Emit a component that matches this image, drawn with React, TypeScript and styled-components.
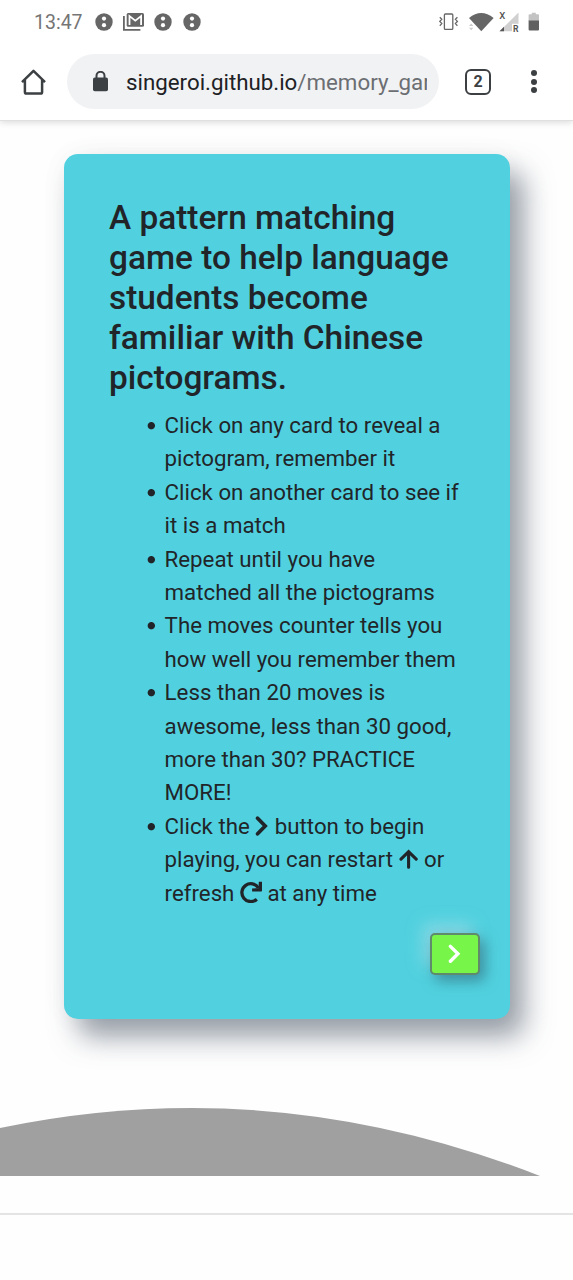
import React from "react";
import styled, { createGlobalStyle } from "styled-components";

const GlobalStyle = createGlobalStyle`
  * { box-sizing: border-box; }
  body { margin: 0; background: #fefefe; font-family: Roboto, sans-serif; }
  svg { display: block; flex: none; }
`;

const Screen = styled.div`
  width: 573px;
  height: 1280px;
  overflow: hidden;
  display: flex;
  flex-direction: column;
`;

const BrowserTop = styled.header`
  height: 121px;
  flex: none;
  background: #fff;
  border-bottom: 1px solid #e0e0e0;
  box-shadow: 0 1px 7px rgba(0, 0, 0, 0.16);
`;

const StatusBar = styled.div`
  height: 43px;
  padding: 0 33px 0 34px;
  display: flex;
  align-items: center;
  justify-content: space-between;
`;

const StatusGroup = styled.div`
  display: flex;
  align-items: center;
`;

const Clock = styled.span`
  width: 61px;
  padding-top: 2px;
  font-size: 19.5px;
  line-height: 24px;
  color: #757575;
`;

const AddressRow = styled.div`
  height: 77px;
  padding: 0 24px 0 20px;
  display: flex;
  align-items: center;
`;

const AddressField = styled.div`
  width: 372px;
  height: 55px;
  margin: 0 26px 0 20px;
  padding: 0 12px 0 25px;
  display: flex;
  align-items: center;
  border-radius: 28px;
  background: #f1f2f4;
`;

const Url = styled.span`
  margin-left: 17px;
  width: 301px;
  overflow: hidden;
  white-space: nowrap;
  font-size: 22.3px;
  line-height: 32px;
  color: #202124;
`;

const UrlPath = styled.span`
  color: #6b6e72;
`;

const TabCount = styled.div`
  width: 26px;
  height: 26px;
  border: 2.5px solid #3c4043;
  border-radius: 6px;
  display: flex;
  align-items: center;
  justify-content: center;
  font: 700 16px/20px Roboto, sans-serif;
  color: #3c4043;
`;

const MenuDots = styled.div`
  margin-left: 40px;
  display: flex;
  flex-direction: column;
  gap: 2.6px;
`;

const Dot = styled.span`
  width: 6px;
  height: 6px;
  border-radius: 50%;
  background: #3c4043;
`;

const Card = styled.main`
  width: 446px;
  height: 865px;
  flex: none;
  margin: 33px 0 0 64px;
  padding: 44px 30px 44px 45px;
  display: flex;
  flex-direction: column;
  border-radius: 14px;
  background: #51d1df;
  box-shadow: 14px 18px 28px rgba(70, 82, 98, 0.55), 0 0 30px rgba(0, 0, 0, 0.035);
  color: #212529;
`;

const Title = styled.h1`
  width: 356px;
  margin: 0 0 11px;
  font-size: 33.4px;
  font-weight: 500;
  line-height: 40px;
`;

const Rules = styled.ul`
  width: 356px;
  margin: 0;
  padding: 0 0 0 37.6px;
  list-style: none;
  font-size: 22.27px;
  line-height: 33.4px;
`;

const Rule = styled.li`
  padding-left: 18px;
  background: radial-gradient(circle at 4.3px 16.7px, #212529 3.2px, transparent 4.1px);
`;

const InlineIcon = styled.svg`
  && { display: inline-block; }
  vertical-align: -2px;
`;

const NextButton = styled.button`
  width: 50px;
  height: 42px;
  margin: 23px 0 0;
  padding: 0;
  align-self: flex-end;
  display: flex;
  align-items: center;
  justify-content: center;
  border: 2px solid #5f8a6b;
  border-radius: 5px;
  background: #77f548;
  box-shadow: 5px 6px 14px rgba(40, 80, 95, 0.5), -7px -9px 16px rgba(190, 225, 235, 0.5);
`;

const Hill = styled.svg`
  margin-top: 89px;
`;

const Divider = styled.hr`
  width: 100%;
  height: 2px;
  margin: 37px 0 0;
  border: 0;
  background: #e4e4e4;
`;

const NoticeIcon = ({ gap = 0 }: { gap?: number }) => (
  <svg width={18 + gap} height="18" viewBox={`0 0 ${18 + gap} 18`}>
    <circle cx="9" cy="9" r="8.7" fill="#666" />
    <circle cx="9" cy="5.6" r="2.1" fill="#fff" />
    <circle cx="9" cy="12.2" r="2.1" fill="#fff" />
  </svg>
);

const MailIcon = () => (
  <svg width="30.5" height="20" viewBox="0 0 30.5 20">
    <path d="M.9 4v13.8h16.5" fill="none" stroke="#666" strokeWidth="1.8" />
    <rect x="3.7" y="1" width="17.3" height="13.8" rx="1.5" fill="#666" />
    <path d="M6.5 13V4l5.8 4.6L18.1 4v9" fill="none" stroke="#fff" strokeWidth="1.8" />
  </svg>
);

const VibrateIcon = () => (
  <svg width="30" height="20" viewBox="0 0 30 20">
    <g fill="none" stroke="#666" strokeWidth="1.3">
      <rect x="5.4" y="2" width="8.4" height="15.4" rx="1" />
      <path d="M.8 5.2l2 2-2 2.2 2 2.2-2 2.2M18.4 5.2l-2 2 2 2.2-2 2.2 2 2.2" />
    </g>
  </svg>
);

const WifiIcon = () => (
  <svg width="30" height="20" viewBox="0 0 30 20">
    <path d="M0 6Q12.2-4.2 24.6 6L12.3 19.2z" fill="#666" />
    <path d="M0 14l2.2-2.4L4.4 14zM0 15.8h4.4l-2.2 2.4z" fill="#ccc" />
  </svg>
);

const SignalIcon = () => (
  <svg width="29" height="24" viewBox="0 0 29 24">
    <path d="M19.5 2.5v18.8H.5z" fill="#d0d0d0" />
    <path d="M5 16.8v4.5H.5z" fill="#555" />
    <path d="M13 13.8h7.5v8H13z" fill="#fff" />
    <text x=".2" y="9.4" fontSize="9.5" fontWeight="500" fill="#555">X</text>
    <text x="14" y="22" fontSize="8.6" fontWeight="700" fill="#555">R</text>
  </svg>
);

const BatteryIcon = () => (
  <svg width="12" height="20" viewBox="0 0 12 20">
    <path d="M1.6 2.2h2.2V.8h4v1.4H10q1 0 1 1V9H.6V3.2q0-1 1-1z" fill="#c3c3c3" />
    <path d="M.6 8.5H11v9q0 1-1 1H1.6q-1 0-1-1z" fill="#606060" />
  </svg>
);

const HomeIcon = () => (
  <svg width="27" height="28" viewBox="0 0 27 28">
    <path
      d="M2 14.2L13.5 2.9 25 14.2M4.9 11.8V24q0 1.6 1.6 1.6h14q1.6 0 1.6-1.6V11.8"
      fill="none"
      stroke="#3c4043"
      strokeWidth="2.5"
      strokeLinejoin="round"
    />
  </svg>
);

const LockIcon = () => (
  <svg width="17" height="22" viewBox="0 0 17 22">
    <rect x="1" y="6.6" width="15" height="13.6" rx="1.8" fill="#3c4043" />
    <path d="M4.5 7.6V4.8a4 4 0 0 1 8 0v2.8" fill="none" stroke="#3c4043" strokeWidth="2" />
  </svg>
);

const ChevronIcon = () => (
  <InlineIcon width="14" height="20" viewBox="0 0 14 20">
    <path
      d="M2.6 2.2L10.2 10l-7.6 7.8"
      fill="none"
      stroke="#212529"
      strokeWidth="3.7"
      strokeLinecap="round"
    />
  </InlineIcon>
);

const ArrowUpIcon = () => (
  <InlineIcon width="20" height="20" viewBox="0 0 20 20">
    <path
      d="M2 10.2L9.6 2.6l7.6 7.6M9.6 3v15.2"
      fill="none"
      stroke="#212529"
      strokeWidth="3.1"
      strokeLinecap="round"
    />
  </InlineIcon>
);

const RefreshIcon = () => (
  <InlineIcon width="22" height="22" viewBox="0 0 22 22">
    <path
      d="M18.4 7A8.9 8.9 0 1 0 16.8 18.2"
      fill="none"
      stroke="#212529"
      strokeWidth="3.3"
      strokeLinejoin="round"
    />
    <path d="M22 .8v9q0 .7-.7.7h-9.2V7.4l6.4-.2.3-6.4z" fill="#212529" />
  </InlineIcon>
);

export default function App() {
  return (
    <Screen>
      <GlobalStyle />
      <BrowserTop>
        <StatusBar>
          <StatusGroup>
            <Clock>13:47</Clock>
            <NoticeIcon gap={10} />
            <MailIcon />
            <NoticeIcon gap={11} />
            <NoticeIcon />
          </StatusGroup>
          <StatusGroup>
            <VibrateIcon />
            <WifiIcon />
            <SignalIcon />
            <BatteryIcon />
          </StatusGroup>
        </StatusBar>
        <AddressRow>
          <HomeIcon />
          <AddressField>
            <LockIcon />
            <Url>
              singeroi.github.io<UrlPath>/memory_gam</UrlPath>
            </Url>
          </AddressField>
          <TabCount>2</TabCount>
          <MenuDots>
            <Dot />
            <Dot />
            <Dot />
          </MenuDots>
        </AddressRow>
      </BrowserTop>
      <Card>
        <Title>
          A pattern matching game to help language students become familiar with Chinese pictograms.
        </Title>
        <Rules>
          <Rule>Click on any card to reveal a pictogram, remember it</Rule>
          <Rule>Click on another card to see if it is a match</Rule>
          <Rule>Repeat until you have matched all the pictograms</Rule>
          <Rule>The moves counter tells you how well you remember them</Rule>
          <Rule>Less than 20 moves is awesome, less than 30 good, more than 30? PRACTICE MORE!</Rule>
          <Rule>
            Click the <ChevronIcon /> button to begin playing, you can restart <ArrowUpIcon /> or
            refresh <RefreshIcon /> at any time
          </Rule>
        </Rules>
        <NextButton aria-label="Begin">
          <svg width="14" height="20" viewBox="0 0 14 20">
            <path d="M2.4 2.4L9.9 9.8l-7.5 7.4" fill="none" stroke="#fff" strokeWidth="3.4" strokeLinecap="round" />
          </svg>
        </NextButton>
      </Card>
      <Hill width="573" height="68" viewBox="0 0 573 68">
        <path d="M0 20Q96 0 192 0 366 0 540 68H0z" fill="#a0a0a0" />
      </Hill>
      <Divider />
    </Screen>
  );
}
